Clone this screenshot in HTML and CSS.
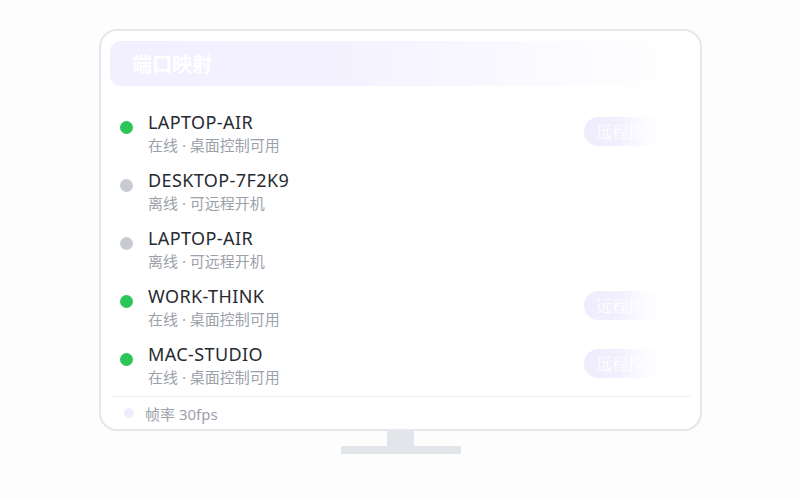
FILE: index.html
```html
<!DOCTYPE html>
<html lang="zh-CN">
<head>
<meta charset="utf-8">
<title>端口映射</title>
<link rel="stylesheet" href="styles.css">
</head>
<body>
<div class="stage">
  <div class="monitor">
    <div class="screen">
      <div class="header">
        <span class="title">端口映射</span>
        <span class="count">5 台</span>
      </div>
      <ul class="list">
        <li class="row">
          <span class="dot online"></span>
          <div class="info">
            <div class="name">LAPTOP-AIR</div>
            <div class="sub">在线 · 桌面控制可用</div>
          </div>
          <span class="btn">远程控制</span>
        </li>
        <li class="row">
          <span class="dot offline"></span>
          <div class="info">
            <div class="name">DESKTOP-7F2K9</div>
            <div class="sub">离线 · 可远程开机</div>
          </div>
        </li>
        <li class="row">
          <span class="dot offline"></span>
          <div class="info">
            <div class="name">LAPTOP-AIR</div>
            <div class="sub">离线 · 可远程开机</div>
          </div>
        </li>
        <li class="row">
          <span class="dot online"></span>
          <div class="info">
            <div class="name">WORK-THINK</div>
            <div class="sub">在线 · 桌面控制可用</div>
          </div>
          <span class="btn">远程控制</span>
        </li>
        <li class="row">
          <span class="dot online"></span>
          <div class="info">
            <div class="name">MAC-STUDIO</div>
            <div class="sub">在线 · 桌面控制可用</div>
          </div>
          <span class="btn">远程控制</span>
        </li>
      </ul>
      <div class="footer">
        <span class="fdot"></span>
        <span class="ftext">帧率 30fps</span>
      </div>
    </div>
    <div class="neck"></div>
    <div class="base"></div>
  </div>
</div>
</body>
</html>
```

FILE: styles.css
```css
* { box-sizing: border-box; }
html, body { margin: 0; padding: 0; }
body {
  width: 800px;
  height: 500px;
  background: #fdfdfd;
  font-family: "Noto Sans", "Noto Sans CJK SC", sans-serif;
  overflow: hidden;
}
.stage {
  padding: 29px 0 0 99px;
}
.monitor {
  width: 603px;
  display: flex;
  flex-direction: column;
  align-items: center;
}
.screen {
  width: 603px;
  height: 402px;
  border: 2px solid #e4e7eb;
  border-radius: 18px;
  background: #fff;
  padding: 10px 8px 0 9px;
  display: flex;
  flex-direction: column;
}
.header {
  height: 45px;
  border-radius: 10px;
  background: linear-gradient(90deg, #f2efff 0%, #f4f2ff 40%, #fbfaff 75%, #ffffff 100%);
  display: flex;
  align-items: center;
  justify-content: space-between;
  padding: 0 14px 0 22px;
}
.title {
  color: #ffffff;
  font-size: 20px;
  font-weight: 700;
}
.count {
  color: #ffffff;
  font-size: 14px;
}
.list {
  list-style: none;
  margin: 18px 0 0 0;
  padding: 0;
}
.row {
  height: 58px;
  display: flex;
  align-items: flex-start;
  padding-top: 6px;
  padding-left: 10px;
  padding-right: 18px;
}
.dot {
  width: 13px;
  height: 13px;
  border-radius: 50%;
  flex: none;
  margin-top: 11px;
}
.dot.online { background: #2cc55a; }
.dot.offline { background: #c8ccd2; }
.info {
  margin-left: 15px;
  flex: 1;
  display: flex;
  flex-direction: column;
}
.name {
  font-size: 18px;
  line-height: 24px;
  color: #262a31;
  font-weight: 400;
  letter-spacing: 0.4px;
}
.sub {
  font-size: 15px;
  line-height: 22px;
  color: #9ca1aa;
}
.btn {
  width: 90px;
  height: 29px;
  border-radius: 15px;
  background: linear-gradient(90deg, #efecfd 0%, #f2f0fe 40%, #fbfaff 65%, #ffffff 82%);
  color: #ffffff;
  font-family: "Noto Serif CJK SC", "Noto Sans CJK SC", serif;
  font-size: 16px;
  line-height: 29px;
  padding-left: 12px;
  white-space: nowrap;
  margin-top: 7px;
}
.footer {
  margin-top: 2px;
  margin-left: 2px;
  margin-right: 1px;
  border-top: 1px solid #eceef1;
  height: 33px;
  display: flex;
  align-items: center;
  padding-left: 12px;
}
.fdot {
  width: 10px;
  height: 10px;
  border-radius: 50%;
  background: #efecfd;
}
.ftext {
  margin-left: 11px;
  font-size: 15px;
  color: #9ca1aa;
}
.neck {
  width: 27px;
  height: 15px;
  background: #e2e5e9;
}
.base {
  width: 120px;
  height: 8px;
  background: #e2e5e9;
}
```
